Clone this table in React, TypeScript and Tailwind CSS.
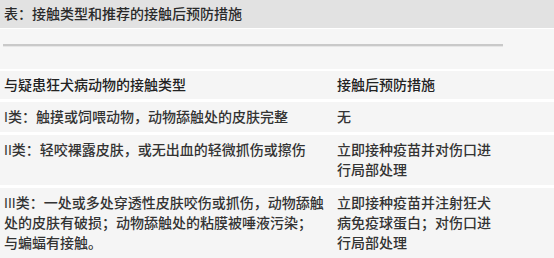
import React from 'react';

const rows = [
  {
    left: ['I类：触摸或饲喂动物，动物舔触处的皮肤完整'],
    right: ['无'],
  },
  {
    left: ['II类：轻咬裸露皮肤，或无出血的轻微抓伤或擦伤'],
    right: ['立即接种疫苗并对伤口进', '行局部处理'],
  },
  {
    left: [
      'III类：一处或多处穿透性皮肤咬伤或抓伤，动物舔触',
      '处的皮肤有破损；动物舔触处的粘膜被唾液污染；',
      '与蝙蝠有接触。',
    ],
    right: ['立即接种疫苗并注射狂犬', '病免疫球蛋白；对伤口进', '行局部处理'],
  },
];

const Lines: React.FC<{ lines: string[] }> = ({ lines }) => (
  <div>
    {lines.map((l, i) => (
      <div key={i} className="whitespace-nowrap">{l}</div>
    ))}
  </div>
);

export default function App() {
  return (
    <div
      className="w-[554px] h-[258px] overflow-hidden bg-white text-[14px] font-medium text-[#333] flex flex-col gap-[1px]"
      style={{ fontFamily: '"Liberation Sans", "Noto Sans CJK SC", sans-serif' }}
    >
      <div className="h-[28px] shrink-0 bg-[#e2e2e2] px-[4px] flex items-center text-[#2a2a2a]">
        表：接触类型和推荐的接触后预防措施
      </div>

      <div className="h-[40px] shrink-0 bg-[#f6f6f6] pl-[3px] pt-[15px]">
        <div className="w-[500px] h-[3px] border-t-2 border-[#c9c9c9] bg-[#e6e6e6]" />
      </div>

      <div className="flex flex-col gap-[3px] mt-[1px]">
        <div className="bg-[#f5f5f5] grid grid-cols-[333px_1fr] px-[4px] py-[4px] leading-[20px] text-[#222]">
          <div>与疑患狂犬病动物的接触类型</div>
          <div>接触后预防措施</div>
        </div>
        {rows.map((r, i) => (
          <div key={i} className="bg-[#f5f5f5] grid grid-cols-[333px_1fr] px-[4px] py-[5px] leading-[20px]">
            <Lines lines={r.left} />
            <Lines lines={r.right} />
          </div>
        ))}
      </div>
    </div>
  );
}
